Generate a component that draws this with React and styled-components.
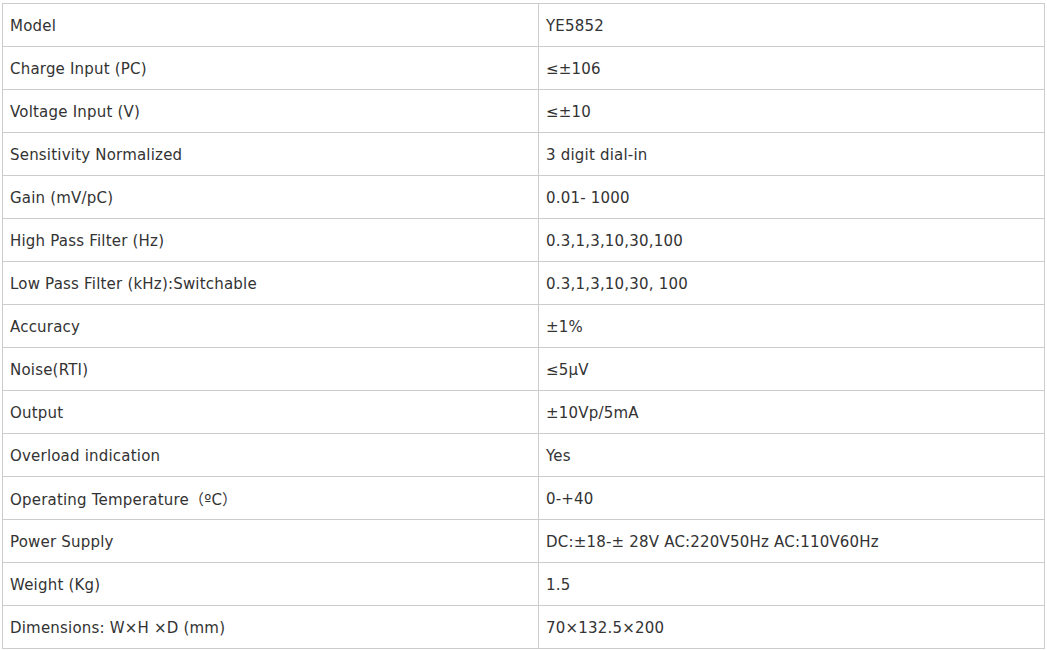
import React from "react";
import styled, { createGlobalStyle } from "styled-components";

const rows = [
  ["Model", "YE5852"],
  ["Charge Input (PC)", "≤±106"],
  ["Voltage Input (V)", "≤±10"],
  ["Sensitivity Normalized", "3 digit dial-in"],
  ["Gain (mV/pC)", "0.01- 1000"],
  ["High Pass Filter (Hz)", "0.3,1,3,10,30,100"],
  ["Low Pass Filter (kHz):Switchable", "0.3,1,3,10,30, 100"],
  ["Accuracy", "±1%"],
  ["Noise(RTI)", "≤5μV"],
  ["Output", "±10Vp/5mA"],
  ["Overload indication", "Yes"],
  ["Operating Temperature（ºC）", "0-+40"],
  ["Power Supply", "DC:±18-± 28V AC:220V50Hz AC:110V60Hz"],
  ["Weight (Kg)", "1.5"],
  ["Dimensions: W×H ×D (mm)", "70×132.5×200"],
];

const GlobalStyle = createGlobalStyle`
  body {
    margin: 0;
    background: #fff;
  }
`;

const Wrapper = styled.div`
  padding: 3px 0 0 2px;
`;

const SpecTable = styled.table`
  width: 1042px;
  border-collapse: collapse;
  table-layout: fixed;
  font-family: "DejaVu Sans", Verdana, "Noto Sans CJK SC", sans-serif;
  font-size: 15px;
  letter-spacing: 0.2px;
  color: #333;
`;

const Row = styled.tr`
  height: 43px;
`;

const Cell = styled.td`
  border: 1px solid #ccc;
  padding: 1px 7px 0;
  vertical-align: middle;
  white-space: nowrap;
`;

export default function App() {
  return (
    <Wrapper>
      <GlobalStyle />
      <SpecTable>
        <colgroup>
          <col style={{ width: "536px" }} />
          <col style={{ width: "506px" }} />
        </colgroup>
        <tbody>
          {rows.map(([label, value]) => (
            <Row key={label}>
              <Cell>{label}</Cell>
              <Cell>{value}</Cell>
            </Row>
          ))}
        </tbody>
      </SpecTable>
    </Wrapper>
  );
}
